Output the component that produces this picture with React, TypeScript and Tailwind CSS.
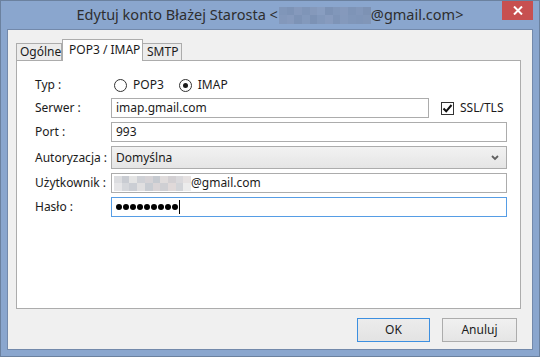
import React from "react";

const titleBlur: string[][] = [
  ["#8096b9", "#7d93b6", "#8599bc", "#7f95b8", "#8599bb", "#889dc0", "#7c92b5", "#8197ba", "#8599bc", "#7e94b7", "#8297ba", "#7d92b4"],
  ["#8398bb", "#869abd", "#7d93b6", "#8399bc", "#7c92b5", "#8298bb", "#879bbe", "#7e94b7", "#8499bc", "#8096b9", "#7f95b8", "#8196b8"],
];

const userBlur: string[][] = [
  ["#dcdde0", "#c9ccd2", "#e4e4e4", "#cfd1d6", "#d6d3d6", "#c6cad0", "#e0dcdc", "#d3d0d3", "#dad9dc", "#e6e2e2"],
  ["#e6e6e8", "#d5d7db", "#cbced4", "#e0dfe0", "#c8ccd2", "#d9d4d6", "#cfcfd3", "#e0d9d9", "#d2d4d8", "#ececec"],
];

function Radio({ checked }: { checked?: boolean }) {
  return (
    <span className="w-[13px] h-[13px] rounded-full border border-[#333333] bg-white flex items-center justify-center">
      {checked && <span className="w-[5px] h-[5px] rounded-full bg-[#1a1a1a]" />}
    </span>
  );
}

export default function App() {
  return (
    <div className="relative w-[540px] h-[357px] bg-[#8aa6ce] border border-[#6b819f] flex flex-col font-['Noto_Sans',sans-serif] text-[12px] text-[#1b1b1b] overflow-hidden">
      {/* Title bar */}
      <div className="h-[28px] flex items-center justify-center text-[14.5px] text-[#2e2e2e]">
        <span>Edytuj konto Błażej Starosta &lt;</span>
        <span className="flex flex-col w-[92px] h-[17px] ml-[1px]">
          {titleBlur.map((row, i) => (
            <span key={i} className="flex flex-1">
              {row.map((c, j) => (
                <span key={j} className="flex-1" style={{ background: c }} />
              ))}
            </span>
          ))}
        </span>
        <span>@gmail.com&gt;</span>
      </div>
      <div className="absolute top-[-1px] left-[501px] w-[31px] h-[20px] bg-[#c75050] flex items-center justify-center">
        <svg width="10" height="9" viewBox="0 0 10 9">
          <path d="M1 0.5 L9 8.5 M9 0.5 L1 8.5" stroke="white" strokeWidth="2" />
        </svg>
      </div>

      {/* Client */}
      <div className="flex-1 mx-[6px] mb-[6px] border border-[#7389ab] bg-[#f0f0f0] flex flex-col pl-[8px] pr-[11px] pt-[9px]">
        {/* Tabs */}
        <div className="flex items-end h-[21px]">
          <div className="h-[17px] w-[46px] border border-b-0 border-[#acacac] bg-[#ececec] flex items-center pl-[3px]">
            Ogólne
          </div>
          <div className="h-[22px] w-[81px] -mb-px border border-b-0 border-[#acacac] bg-white flex items-start pt-[1px] pl-[6px] relative z-10">
            POP3 / IMAP
          </div>
          <div className="h-[17px] w-[39px] border border-b-0 border-l-0 border-[#acacac] bg-[#ececec] flex items-center pl-[4px]">
            SMTP
          </div>
        </div>

        {/* Panel */}
        <div className="h-[249px] border border-[#acacac] bg-white flex flex-col pl-[18px] pr-[13px] pt-[15px] gap-[4px]">
          <div className="flex items-center h-[18px]">
            <span className="w-[76px]">Typ :</span>
            <span className="ml-[3px] flex items-center gap-[6px]">
              <Radio />
              <span>POP3</span>
            </span>
            <span className="ml-[15px] flex items-center gap-[6px]">
              <Radio checked />
              <span>IMAP</span>
            </span>
          </div>

          <div className="flex items-center h-[20px]">
            <span className="w-[76px]">Serwer :</span>
            <div className="w-[318px] h-[20px] border border-[#acacac] flex items-center pl-[4px]">imap.gmail.com</div>
            <span className="ml-[12px] w-[13px] h-[13px] border border-[#333333] bg-white flex items-center justify-center">
              <svg width="11" height="11" viewBox="0 0 11 11">
                <path d="M1.5 5.5 L4.2 8.3 L9.5 2" stroke="#111" strokeWidth="2" fill="none" />
              </svg>
            </span>
            <span className="ml-[6px]">SSL/TLS</span>
          </div>

          <div className="flex items-center h-[20px]">
            <span className="w-[76px]">Port :</span>
            <div className="flex-1 h-[20px] border border-[#acacac] flex items-center pl-[4px]">993</div>
          </div>

          <div className="flex items-center h-[23px]">
            <span className="w-[76px]">Autoryzacja :</span>
            <div className="flex-1 h-[23px] border border-[#acacac] bg-gradient-to-b from-[#f2f2f2] to-[#e5e5e5] flex items-center pl-[4px] pr-[7px] justify-between">
              <span>Domyślna</span>
              <svg width="8" height="6" viewBox="0 0 8 6">
                <path d="M1 1 L4 4 L7 1" stroke="#606060" strokeWidth="1.8" fill="none" />
              </svg>
            </div>
          </div>

          <div className="flex items-center h-[20px]">
            <span className="w-[76px]">Użytkownik :</span>
            <div className="flex-1 h-[20px] border border-[#acacac] flex items-center pl-[2px]">
              <span className="flex flex-col w-[77px] h-[15px]">
                {userBlur.map((row, i) => (
                  <span key={i} className="flex flex-1">
                    {row.map((c, j) => (
                      <span key={j} className="flex-1" style={{ background: c }} />
                    ))}
                  </span>
                ))}
              </span>
              <span>@gmail.com</span>
            </div>
          </div>

          <div className="flex items-center h-[20px]">
            <span className="w-[76px]">Hasło :</span>
            <div className="flex-1 h-[20px] border border-[#569de5] flex items-center pl-[4px]">
              <span className="flex gap-[1px]">
                {Array.from({ length: 9 }).map((_, i) => (
                  <span key={i} className="w-[6px] h-[6px] rounded-full bg-black" />
                ))}
              </span>
              <span className="ml-[1px] w-[1px] h-[14px] bg-black" />
            </div>
          </div>
        </div>

        {/* Buttons */}
        <div className="flex justify-end gap-[12px] mt-[9px] pr-[4px]">
          <div className="w-[73px] h-[24px] border border-[#3c8fe0] bg-gradient-to-b from-[#ececec] to-[#e3e3e3] flex items-center justify-center">
            OK
          </div>
          <div className="w-[75px] h-[24px] border border-[#acacac] bg-gradient-to-b from-[#f0f0f0] to-[#e5e5e5] flex items-center justify-center">
            Anuluj
          </div>
        </div>
      </div>
    </div>
  );
}
